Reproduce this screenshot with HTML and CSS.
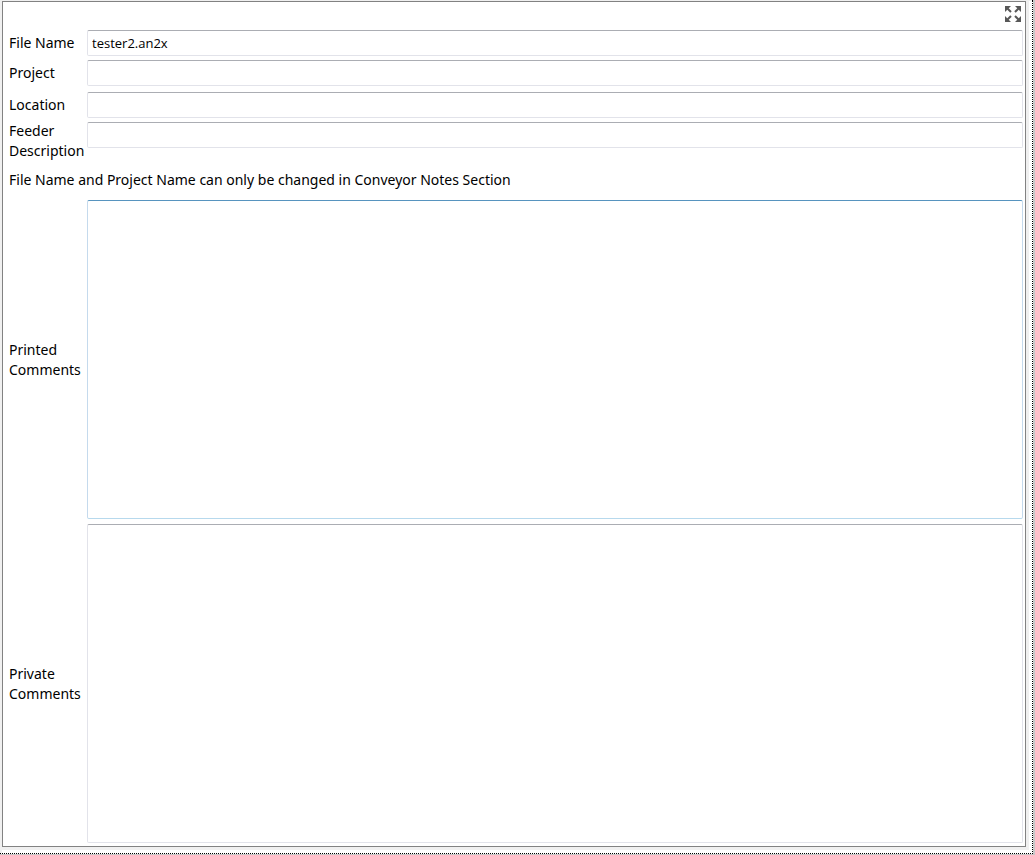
FILE: index.html
```html
<!DOCTYPE html>
<html lang="en">
<head>
<meta charset="utf-8">
<title>Feeder Notes</title>
<link rel="stylesheet" href="styles.css">
</head>
<body>
<div class="surface">
  <form class="panel">
    <div class="toolbar">
      <button class="expand" type="button" aria-label="Expand">
        <svg width="16" height="16" viewBox="0 0 16 16" fill="#585858" stroke="#585858" stroke-width="2">
          <path stroke="none" d="M0 0H6L4.500 1.500 1.500 4.500 0 6ZM16 0V6L14.500 4.500 11.500 1.500 10 0ZM0 16V10L1.500 11.500 4.500 14.500 6 16ZM16 16H10L11.500 14.500 14.500 11.500 16 10Z"/>
          <path d="M2 2L6 6M14 2L10 6M2 14L6 10M14 14L10 10"/>
        </svg>
      </button>
    </div>
    <div class="fields">
      <label class="label" for="file">File Name</label>
      <input class="box" id="file" type="text" value="tester2.an2x">
      <label class="label" for="project">Project</label>
      <input class="box" id="project" type="text">
      <label class="label" for="location">Location</label>
      <input class="box" id="location" type="text">
      <label class="label label-tall" for="feeder">Feeder Description</label>
      <input class="box" id="feeder" type="text">
    </div>
    <p class="note">File Name and Project Name can only be changed in Conveyor Notes Section</p>
    <div class="comments">
      <label class="label" for="printed">Printed Comments</label>
      <textarea class="box area active" id="printed"></textarea>
      <label class="label" for="private">Private Comments</label>
      <textarea class="box area" id="private"></textarea>
    </div>
  </form>
</div>
</body>
</html>
```
FILE: styles.css
```css
* {
  box-sizing: border-box;
}

body {
  margin: 0;
  height: 100vh;
  padding: 0 2px 1px 0;
  background: #c8c8c8;
  color: #000;
  font: 14px/20px "Noto Sans", "Open Sans", sans-serif;
}

.surface {
  height: 100%;
  padding: 1px 6px 6px 2px;
  border-right: 1px dotted #000;
  border-bottom: 1px dotted #000;
  background: #fff;
  box-shadow: inset 2px 1px #f0f0f0, inset -3px -3px #fff, inset -6px -6px #f0f0f0;
}

.panel {
  display: flex;
  flex-direction: column;
  height: 100%;
  padding: 0 2px 3px 6px;
  border: 1px solid #828282;
  background: #fff;
}

.toolbar {
  display: flex;
  justify-content: flex-end;
  height: 28px;
  padding: 4px 2px;
}

.expand {
  width: 16px;
  height: 16px;
  padding: 0;
  border: 0;
  background: none;
}

.expand svg {
  display: block;
}

.fields,
.comments {
  display: grid;
  grid-template-columns: 78px 1fr;
}

.fields {
  grid-template-rows: 30px 32px 30px 40px;
}

.label {
  align-self: center;
}

.fields .label {
  align-self: start;
  padding-top: 3px;
}

.fields .label-tall {
  padding-top: 0;
  margin-top: -1px;
}

.box {
  width: 100%;
  height: 26px;
  padding: 0 4px;
  border: 1px solid #e2e3ea;
  border-top-color: #abadb3;
  border-radius: 2px;
  outline: 0;
  background: #fff;
  color: #000;
  font: 13px/20px "Open Sans", "Noto Sans", sans-serif;
}

.note {
  height: 38px;
  margin: 0;
  padding-top: 8px;
}

.comments {
  flex: 1;
  grid-template-rows: 1fr 1fr;
  row-gap: 5px;
}

.area {
  display: block;
  height: 100%;
  resize: none;
}

.active {
  border-color: #c5daed;
  border-top-color: #5794bf;
  border-bottom-color: #b7d9ed;
}
```
